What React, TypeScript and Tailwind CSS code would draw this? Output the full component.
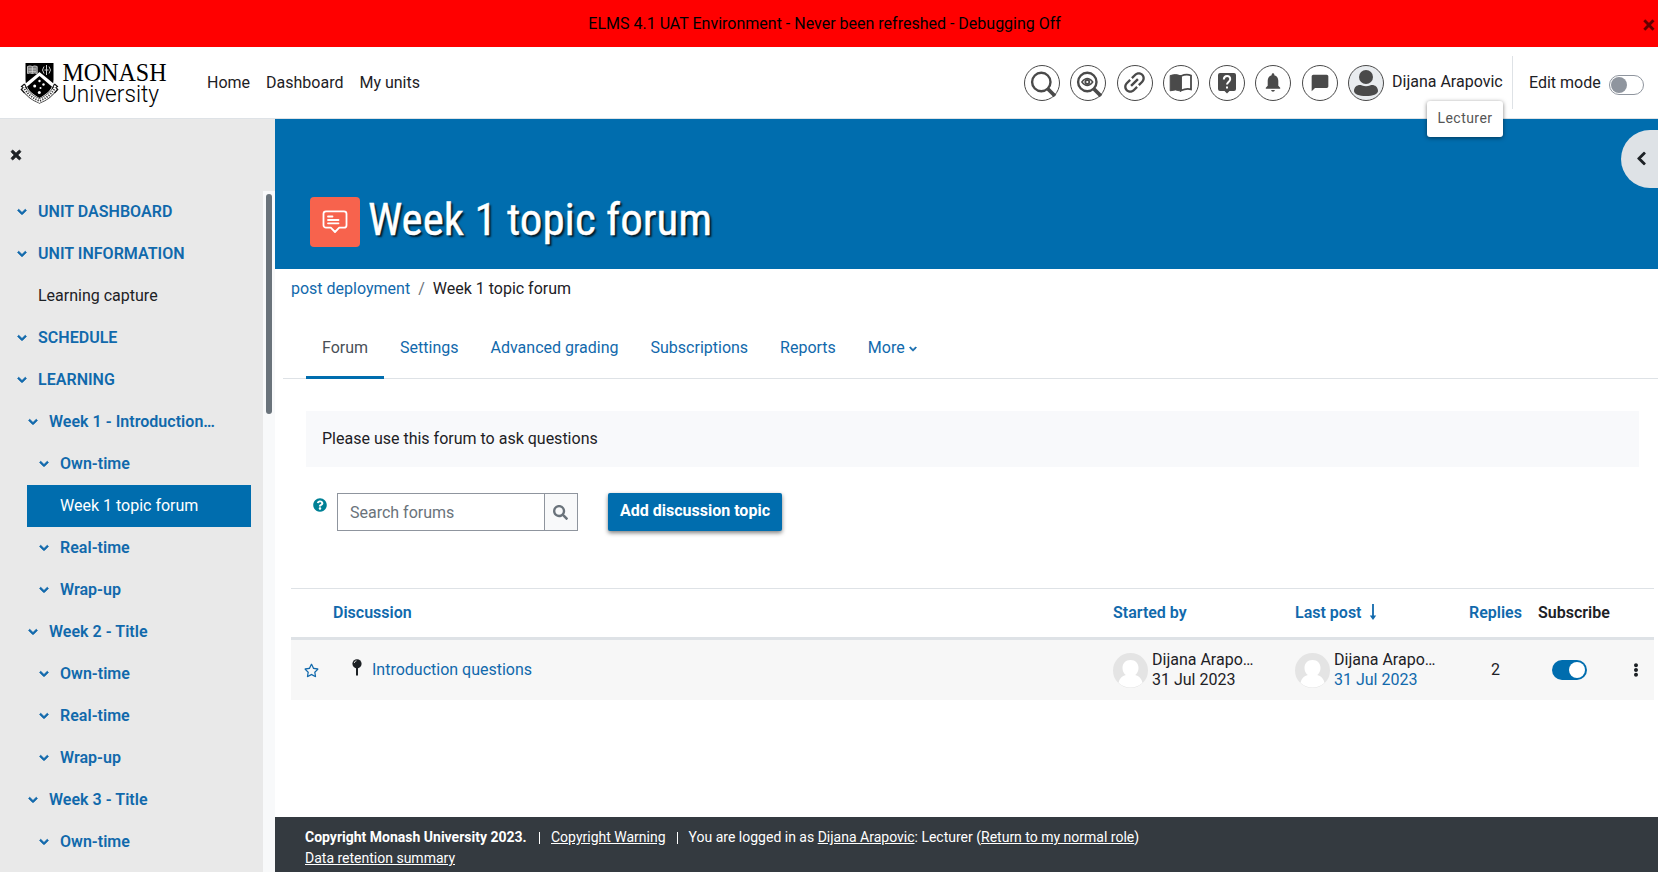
import type { ReactNode } from "react";
import { FaChevronDown, FaChevronLeft, FaEllipsisV, FaQuestionCircle, FaRegStar, FaSearch, FaTimes } from "react-icons/fa";
import { MdChatBubble, MdLink } from "react-icons/md";

function Logo() {
  return (
    <svg width="150" height="63" viewBox="0 -9 150 63" className="shrink-0" aria-label="Monash University">
      <path d="M5.500 3h28v17c0 9-7 14-14 18C12.500 34 5.500 29 5.500 20z" fill="#000" />
      <path d="M5.500 23.500l14-11.500 14 11.500v4.500L19.500 16 5.500 28z" fill="#fff" />
      <path d="M7.500 6.500q2.500-1.200 4.800 0 2.400-1.200 4.900 0v7q-2.500-1-4.900 0-2.300-1-4.800 0zM12.300 6.500v7M8.500 9h7.500M8.500 11.300h7.500" fill="#777" stroke="#ddd" strokeWidth=".8" />
      <path d="M24 6.500q-3 3.500 0 7M29 6.500q3 3.500 0 7M26.500 5v10M24.500 10h4" fill="none" stroke="#ccc" strokeWidth="1" />
      <g fill="#fff">
        <circle cx="19.500" cy="21" r="1.200" /><circle cx="14.700" cy="26" r="1.500" /><circle cx="23.500" cy="24.500" r="1.200" />
        <circle cx="20.500" cy="28" r="1" /><circle cx="19.300" cy="32.500" r="1.500" />
      </g>
      <path d="M3.500 28C8 35 13 38.500 19.500 41 26 38.500 31 35 35.500 28" fill="none" stroke="#222" strokeWidth="5" />
      <path d="M3.500 28C8 35 13 38.500 19.500 41 26 38.500 31 35 35.500 28" fill="none" stroke="#fff" strokeWidth="3.600" />
      <path d="M4.500 29C9 35.500 13.500 38.500 19.500 41 25.500 38.500 30 35.500 34.500 29" fill="none" stroke="#333" strokeWidth="1.900" strokeDasharray="1.200 1.300" />
      <path d="M4.500 24l-3 2.500 1.500 1-1.800 2 3.300 3.500M34.500 24l3 2.500-1.500 1 1.800 2-3.300 3.500M4.500 24l2.500 5M34.500 24l-2.500 5" fill="none" stroke="#111" strokeWidth="1.100" />
      <text x="42.500" y="20.800" textLength="104" lengthAdjust="spacingAndGlyphs" fontFamily="Liberation Serif, serif" fontSize="26" fill="#000">MONASH</text>
      <text x="42" y="42" textLength="97" lengthAdjust="spacingAndGlyphs" fontFamily="Roboto, sans-serif" fontWeight="300" fontSize="23" fill="#000">University</text>
    </svg>
  );
}

function Round({ children }: { children: ReactNode }) {
  return (
    <span className="flex size-9 shrink-0 items-center justify-center rounded-full border border-[#4a4a4a] text-[#4a4a4a]">
      {children}
    </span>
  );
}

function HeaderIcons() {
  return (
    <div className="flex items-center gap-[10.300px]">
      <Round>
        <svg width="34" height="34" viewBox="0 0 34 34" fill="none" stroke="currentColor">
          <circle cx="16.300" cy="16" r="9.200" strokeWidth="2.400" /><path d="M23 23l7 7" strokeWidth="3.800" />
        </svg>
      </Round>
      <Round>
        <svg width="34" height="34" viewBox="0 0 34 34" fill="none" stroke="currentColor">
          <circle cx="16.300" cy="16" r="9.200" strokeWidth="2.400" /><path d="M23 23l7 7" strokeWidth="3.800" />
          <path d="M10.800 16q5.500-7 11 0-5.500 7-11 0z" strokeWidth="1.300" />
          <circle cx="16.300" cy="16" r="2" strokeWidth="1.800" />
        </svg>
      </Round>
      <Round><MdLink className="size-[29px] -rotate-45" /></Round>
      <Round>
        <svg width="24" height="24" viewBox="0 0 24 24" fill="none" stroke="currentColor">
          <path d="M1.200 4.500Q6.500 2.500 12 4.800v15.400Q6.500 17.800 1.200 19.800z" fill="currentColor" strokeWidth="1" />
          <path d="M12 5Q17.500 2.700 22 4.500v13.800Q17.500 17 12 19.500z" strokeWidth="1.800" />
        </svg>
      </Round>
      <Round>
        <svg width="24" height="24" viewBox="0 0 24 24">
          <path d="M5 2h14a2 2 0 0 1 2 2v14a2 2 0 0 1-2 2h-4.500L12 22.500 9.500 20H5a2 2 0 0 1-2-2V4a2 2 0 0 1 2-2z" fill="currentColor" />
          <path d="M8.800 8.500C9 3.500 15.500 4 15.200 8.300c-.2 2.500-3.200 2.800-3.200 5.200" fill="none" stroke="#fff" strokeWidth="2" />
          <path d="M11 15.500h2v2h-2z" fill="#fff" />
        </svg>
      </Round>
      <Round>
        <svg width="24" height="24" viewBox="0 0 24 24" fill="currentColor">
          <path d="M12 2.300c.8 0 1.300.6 1.300 1.300v.6c2.700.7 4 3 4 5.600v5l1.900 2v1H4.800v-1l1.900-2v-5c0-2.600 1.300-4.900 4-5.600v-.6c0-.7.500-1.300 1.300-1.300zM10.200 19h3.600c0 2.200-3.600 2.200-3.600 0z" />
        </svg>
      </Round>
      <Round><MdChatBubble className="size-5" /></Round>
      <span className="flex size-9 shrink-0 items-center justify-center rounded-full border border-[#4a4a4a] bg-[#e9ecef]">
        <svg width="34" height="34" viewBox="0 0 34 34" fill="#4a4a4a">
          <circle cx="17" cy="11" r="7" /><path d="M5 25c0-5 5-7 8-5.500 2.500 1 5.500 1 8 0 3-1.500 8 .5 8 5.500 0 3-5 5-12 5s-12-2-12-5z" />
        </svg>
      </span>
    </div>
  );
}

const sections: { label: string; level: number; kind?: "leaf" | "active" }[] = [
  { label: "UNIT DASHBOARD", level: 0 },
  { label: "UNIT INFORMATION", level: 0 },
  { label: "Learning capture", level: 0, kind: "leaf" },
  { label: "SCHEDULE", level: 0 },
  { label: "LEARNING", level: 0 },
  { label: "Week 1 - Introduction…", level: 1 },
  { label: "Own-time", level: 2 },
  { label: "Week 1 topic forum", level: 2, kind: "active" },
  { label: "Real-time", level: 2 },
  { label: "Wrap-up", level: 2 },
  { label: "Week 2 - Title", level: 1 },
  { label: "Own-time", level: 2 },
  { label: "Real-time", level: 2 },
  { label: "Wrap-up", level: 2 },
  { label: "Week 3 - Title", level: 1 },
  { label: "Own-time", level: 2 },
];

const indents = ["pl-[17px]", "pl-[28px]", "pl-[39px]"];

function Sidebar() {
  return (
    <aside className="flex w-[275px] shrink-0 flex-col bg-[#e9e9e9]">
      <div className="h-[72px] shrink-0 pt-[29px] pl-[9px]"><FaTimes className="size-[14px] stroke-[#1d2125] stroke-[30] text-[#1d2125]" /></div>
      <div className="flex min-h-0 flex-1">
        <nav className="flex-1 overflow-hidden">
          {sections.map(({ label, level, kind }, i) =>
            kind === "active" ? (
              <div key={i} className="mr-3 ml-[27px] flex h-[42px] items-center bg-[#006dae] pl-[33px] text-white">{label}</div>
            ) : (
              <div key={i} className={`flex h-[42px] items-center ${indents[level]} ${kind ? "text-[#1d2125]" : "font-semibold tracking-[0.030px] text-[#1169ac]"}`}>
                <span className="flex w-[21px] shrink-0">{!kind && <FaChevronDown className="size-[10px] overflow-visible stroke-current stroke-[45]" />}</span>
                {label}
              </div>
            ),
          )}
        </nav>
        <div className="w-3 bg-[#f8f9fa] px-[3px] pt-[3px]"><div className="h-[220px] rounded-full bg-[#6a737b]" /></div>
      </div>
    </aside>
  );
}

function Avatar() {
  return (
    <svg width="35" height="35" viewBox="0 0 35 35" className="mr-1 shrink-0">
      <circle cx="17.500" cy="17.500" r="17.500" fill="#e4e4e4" />
      <path d="M17.500 7c5 0 8 3.500 8 8 0 3-1.300 5.500-3.300 7 4 1.200 6.500 3.500 7.300 7.800A17.500 17.500 0 0 1 5.500 29.800c.8-4.300 3.300-6.600 7.300-7.800-2-1.500-3.300-4-3.300-7 0-4.500 3-8 8-8z" fill="#fff" />
    </svg>
  );
}

function Person({ linked }: { linked?: boolean }) {
  return (
    <div className="flex items-center">
      <Avatar />
      <div className="leading-5">
        <div>Dijana Arapo…</div>
        <div className={linked ? "text-[#1169ac]" : ""}>31 Jul 2023</div>
      </div>
    </div>
  );
}

const tableGrid = "grid grid-cols-[42px_780px_182px_174px_69px_83px_33px] items-center";

function Forum() {
  return (
    <div className="flex-1">
      <div className="flex h-[38px] items-center pt-0.5 pl-4">
        <span className="text-[#1169ac]">post deployment</span>
        <span className="px-2 text-[#6a737b]">/</span>
        <span>Week 1 topic forum</span>
      </div>
      <div className="mt-[9px] ml-2 flex h-[63px] border-b border-[#dee2e6] pl-[23px] text-[#1169ac]">
        <div className="-mb-px border-b-3 border-[#006dae] px-4 pt-5 text-[#495057]">Forum</div>
        <div className="px-4 pt-5">Settings</div>
        <div className="px-4 pt-5">Advanced grading</div>
        <div className="px-4 pt-5">Subscriptions</div>
        <div className="px-4 pt-5">Reports</div>
        <div className="flex h-11 items-center px-4 pt-5">More<FaChevronDown className="mt-0.5 ml-1 size-2 overflow-visible stroke-current stroke-[45]" /></div>
      </div>
      <div className="mt-8 mr-[19px] ml-[31px] flex h-14 items-center bg-[#f8f9fb] pl-4">Please use this forum to ask questions</div>
      <div className="mt-[26px] flex h-[38px] items-start pl-[38px]">
        <FaQuestionCircle className="mt-[5px] size-[14px] text-[#008196]" />
        <div className="ml-[10px] flex h-[38px] w-[241px] border border-[#8f959e]">
          <div className="flex flex-1 items-center pt-0.5 pl-3 text-[#6a737b]">Search forums</div>
          <div className="flex w-[33px] items-center justify-center border-l border-[#8f959e] bg-[#f8f9fa] text-[#6a737b]"><FaSearch className="mr-px size-[15px]" /></div>
        </div>
        <button className="ml-[30px] h-[38px] w-[174px] rounded-[2px] bg-[#006dae] pb-[3px] font-bold text-white shadow-[0_2px_4px_rgba(0,0,0,0.5)]">Add discussion topic</button>
      </div>
      <div className="mt-[57px] mr-1 ml-4 border-t border-[#dee2e6]">
        <div className={`${tableGrid} h-[51px] border-b-3 border-[#dee2e6] font-semibold text-[#1169ac]`}>
          <span />
          <span>Discussion</span>
          <span>Started by</span>
          <span className="flex items-center">
            Last post
            <svg width="8" height="18" viewBox="0 0 8 18" fill="none" stroke="currentColor" className="-mt-0.5 ml-2"><path d="M4 1v13" strokeWidth="1.800" /><path d="M.8 12.500h6.400L4 17z" fill="currentColor" stroke="none" /></svg>
          </span>
          <span>Replies</span>
          <span className="text-[#1d2125]">Subscribe</span>
          <span />
        </div>
        <div className={`${tableGrid} h-[60px] bg-[#f7f7f7]`}>
          <FaRegStar className="ml-[13px] size-[15px] text-[#1169ac]" />
          <div className="flex items-center pl-[19px]">
            <svg width="10" height="17" viewBox="0 0 10 17" className="-mt-1.5 mr-[10px]"><circle cx="5" cy="4.800" r="4.600" fill="#1d2125" /><path d="M2.300 4Q2.500 2 4.500 1.800" stroke="#ccc" fill="none" /><path d="M5 9v7.500" stroke="#1d2125" strokeWidth="2" /></svg>
            <span className="text-[#1169ac]">Introduction questions</span>
          </div>
          <Person />
          <Person linked />
          <span className="pl-[22px]">2</span>
          <span className="ml-[14px] flex h-5 w-[35px] items-center justify-end rounded-full bg-[#006dae] pr-0.5"><span className="size-4 rounded-full bg-white" /></span>
          <FaEllipsisV className="ml-2 size-[14px]" />
        </div>
      </div>
    </div>
  );
}

export default function App() {
  return (
    <div className="flex h-[872px] w-[1658px] flex-col overflow-hidden bg-white font-['Roboto',sans-serif] text-base text-[#1d2125]">
      <div className="flex h-[47px] shrink-0 items-center bg-[#ff0000] pl-[7px] text-black">
        <span className="flex-1 text-center">ELMS 4.1 UAT Environment - Never been refreshed - Debugging Off</span>
        <span className="mt-0.5 mr-[3px] text-2xl leading-none font-bold opacity-60">×</span>
      </div>
      <header className="relative flex h-[72px] shrink-0 items-center border-b border-[#dee2e6] pl-5">
        <Logo />
        <nav className="ml-[37px] flex gap-4"><span>Home</span><span>Dashboard</span><span>My units</span></nav>
        <div className="ml-auto flex items-center">
          <HeaderIcons />
          <span className="ml-2 w-[120px] -translate-y-px">Dijana Arapovic</span>
          <div className="h-[53px] w-[17px] border-l border-[#dee2e6]" />
          <span className="w-20">Edit mode</span>
          <span className="mt-1 mr-[14px] flex h-5 w-[35px] items-center rounded-full border border-[#8f959e] pl-px"><span className="size-4 rounded-full bg-[#8f959e]" /></span>
        </div>
        <div className="absolute top-[54px] left-[1427px] z-10 flex h-9 w-[76px] items-center justify-center rounded-[3px] bg-white pb-0.5 text-sm tracking-[0.450px] text-[#555] shadow-[0_1px_4px_rgba(0,0,0,0.5)]">Lecturer</div>
      </header>
      <div className="flex min-h-0 flex-1">
        <Sidebar />
        <div className="flex min-w-0 flex-1 flex-col">
          <div className="relative flex h-[150px] shrink-0 bg-[#006dae] pt-[78px] pl-[35px]">
            <div className="flex size-[50px] items-center justify-center rounded-[4px] bg-[#f7634d]">
              <svg width="26" height="26" viewBox="0 0 26 26" fill="none" stroke="#fff" strokeWidth="1.800" strokeLinecap="round" strokeLinejoin="round">
                <path d="M4 2.300h18a2.500 2.500 0 0 1 2.500 2.500v11.400a2.500 2.500 0 0 1-2.500 2.500h-4.800L13 23l-4.200-4.300H4a2.500 2.500 0 0 1-2.500-2.500V4.800A2.500 2.500 0 0 1 4 2.300zM6 7.500h4.500M6 11h10.500M6 14.300h10.500" />
              </svg>
            </div>
            <h1 className="ml-2 -mt-1 font-['Roboto_Condensed','Roboto'] text-[45px] leading-[54px] font-normal whitespace-nowrap text-white [font-stretch:condensed] [-webkit-text-stroke:0.400px_white] [text-shadow:2px_2px_2px_rgba(0,0,0,0.8)]">Week 1 topic forum</h1>
            <div className="absolute top-[11px] right-0 flex h-[58px] w-[37px] items-center rounded-l-full bg-[#dee2e6] pb-0.5 pl-[13px]"><FaChevronLeft className="size-[15px] overflow-visible stroke-current stroke-[25]" /></div>
          </div>
          <Forum />
          <footer className="h-[55px] shrink-0 bg-[#343a40] pt-[10px] pl-[30px] text-sm leading-[21px] text-white">
            <div className="flex items-center">
              <b className="w-[234px] font-bold">Copyright Monash University 2023.</b>
              <span className="mr-[11px] h-3 w-px bg-white" />
              <span className="underline">Copyright Warning</span>
              <span className="mr-[11px] ml-[11px] h-3 w-px bg-white" />
              <span>You are logged in as <u>Dijana Arapovic</u>: Lecturer (<u>Return to my normal role</u>)</span>
            </div>
            <div className="underline">Data retention summary</div>
          </footer>
        </div>
      </div>
    </div>
  );
}
